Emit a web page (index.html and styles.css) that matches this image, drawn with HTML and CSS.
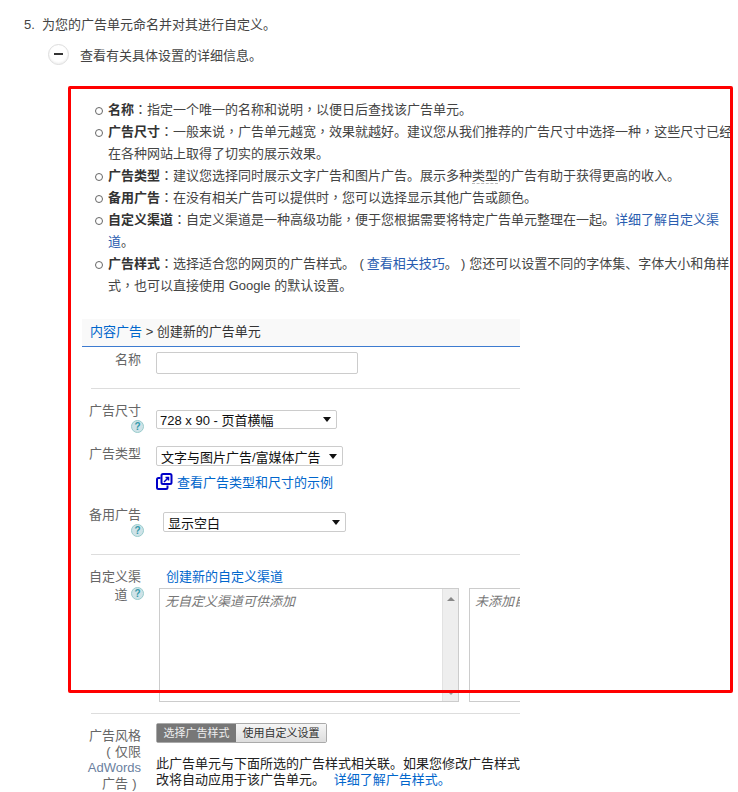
FILE: index.html
```html
<!DOCTYPE html>
<html lang="zh-CN">
<head>
<meta charset="utf-8">
<title>广告单元</title>
<link rel="stylesheet" href="styles.css">
</head>
<body>
<div class="page">
  <div class="step"><span class="num">5.</span><span>为您的广告单元命名并对其进行自定义。</span></div>
  <div class="toggle-row">
    <span class="toggle"><span class="minus"></span></span>
    <span>查看有关具体设置的详细信息。</span>
  </div>
  <ul class="notes">
    <li><b>名称</b><span class="p">：</span>指定一个唯一的名称和说明<span class="p">，</span>以便日后查找该广告单元。</li>
    <li><b>广告尺寸</b><span class="p">：</span>一般来说<span class="p">，</span>广告单元越宽<span class="p">，</span>效果就越好。建议您从我们推荐的广告尺寸中选择一种<span class="p">，</span>这些尺寸已经<br>在各种网站上取得了切实的展示效果。</li>
    <li><b>广告类型</b><span class="p">：</span>建议您选择同时展示文字广告和图片广告。展示多种<span class="dotted">类型</span>的广告有助于获得更高的收入。</li>
    <li><b>备用广告</b><span class="p">：</span>在没有相关广告可以提供时<span class="p">，</span>您可以选择显示其他广告或颜色。</li>
    <li><b>自定义渠道</b><span class="p">：</span>自定义渠道是一种高级功能<span class="p">，</span>便于您根据需要将特定广告单元整理在一起。<a class="link2">详细了解自定义渠</a><br><a class="link2">道</a>。</li>
    <li><b>广告样式</b><span class="p">：</span>选择适合您的网页的广告样式。<span class="paren">(</span> <a class="link2">查看相关技巧</a>。<span class="paren close">)</span> 您还可以设置不同的字体集、字体大小和角样<br>式<span class="p">，</span>也可以直接使用 Google 的默认设置。</li>
  </ul>

  <div class="form">
    <div class="crumb"><a class="link">内容广告</a> &gt; 创建新的广告单元</div>

    <div class="row row-name">
      <div class="label">名称</div>
      <div class="ctl"><input class="name-input" type="text"></div>
    </div>
    <div class="rule"></div>

    <div class="row row-size">
      <div class="label">广告尺寸<br><span class="help">?</span></div>
      <div class="ctl"><div class="select sel-size"><span>728 x 90 - 页首横幅</span><i class="caret"></i></div></div>
    </div>
    <div class="row row-type">
      <div class="label">广告类型</div>
      <div class="ctl">
        <div class="select sel-type"><span>文字与图片广告/富媒体广告</span><i class="caret"></i></div>
        <div class="examples">
          <svg class="copy" width="17" height="17" viewBox="0 0 17 17" aria-hidden="true">
            <rect x="5.500" y="1" width="10" height="10" rx="1.500" fill="#fff" stroke="#0000c8" stroke-width="2"/>
            <path d="M4.500 5H2.500Q1 5 1 6.500V14.500Q1 16 2.500 16H10Q11.500 16 11.500 14.500V12.500" fill="none" stroke="#0000c8" stroke-width="2"/>
            <path d="M8 9L12 5M9.500 4.500H12.500V7.500" fill="none" stroke="#0000c8" stroke-width="1.500"/>
          </svg>
          <a class="link">查看广告类型和尺寸的示例</a>
        </div>
      </div>
    </div>
    <div class="row row-fallback">
      <div class="label">备用广告<br><span class="help">?</span></div>
      <div class="ctl"><div class="select sel-fallback"><span>显示空白</span><i class="caret"></i></div></div>
    </div>
    <div class="rule"></div>

    <div class="row row-channel">
      <div class="label">自定义渠<br>道 <span class="help">?</span></div>
      <div class="ctl">
        <a class="link new-channel">创建新的自定义渠道</a>
        <div class="lists">
          <div class="listbox list-a"><em>无自定义渠道可供添加</em><div class="scroll"><i class="up"></i><i class="down"></i></div></div>
          <div class="listbox list-b"><em>未添加自定义渠道</em></div>
        </div>
      </div>
    </div>
    <div class="rule"></div>

    <div class="row row-style">
      <div class="label">广告风格<br><span class="paren">(</span>仅限<br><span class="adwords">AdWords</span><br>广告<span class="paren">)</span></div>
      <div class="ctl">
        <div class="switch"><span class="on">选择广告样式</span><span class="off">使用自定义设置</span></div>
        <p class="style-text">此广告单元与下面所选的广告样式相关联。如果您修改广告样式<br>改将自动应用于该广告单元。 <a class="link more">详细了解广告样式。</a></p>
      </div>
    </div>
  </div>

  <div class="redbox"></div>
</div>
</body>
</html>
```
FILE: styles.css
```css
* { box-sizing: border-box; }
html, body { margin: 0; padding: 0; background: #fff; }
body { font-family: "Liberation Sans", "Noto Sans CJK SC", sans-serif; font-size: 13px; color: #444; overflow: hidden; }
.page { position: relative; width: 738px; height: 792px; overflow: hidden; padding-top: 15px; }
a { text-decoration: none; }

.step { display: flex; height: 20px; line-height: 20px; padding-left: 24px; }
.num { width: 18px; }
.toggle-row { display: flex; align-items: center; height: 22px; margin-top: 8px; padding-left: 48px; }
.toggle { width: 21px; height: 21px; margin-right: 11px; border: 1px solid #ddd; border-radius: 50%; display: flex; align-items: center; justify-content: center; background: #fff; box-shadow: inset 0 -1px 2px #eee; }
.minus { width: 9px; height: 2px; background: #333; }

.notes { list-style: none; margin: 34px 0 0; padding: 0 0 0 108px; width: 730px; overflow: hidden; white-space: nowrap; line-height: 22px; height: 209px; }
.notes li { position: relative; }
.notes li::before { content: ""; position: absolute; left: -13px; top: 8px; width: 6px; height: 6px; border: 1px solid #666; border-radius: 50%; }
.notes b { color: #333; }
.p { font-family: "Liberation Sans", "Noto Sans CJK TC", sans-serif; font-feature-settings: "locl" 0; }
.paren { display: inline-block; width: 13px; text-align: center; }
.notes .paren + a { margin-left: -5px; }
.notes .close { margin-right: -4px; margin-left: -1px; }
.link2 { color: #2a5db0; }
.dotted { border-bottom: 1px dashed #bbb; }

.form { width: 438px; margin-left: 82px; margin-top: 11px; overflow: hidden; color: #555; font-size: 13px; }
.crumb { height: 28px; line-height: 25px; padding-left: 8px; background: #f9f9f9; border-bottom: 1px solid #3d7bd0; color: #333; }
.link { color: #0066cc; }
.row { display: flex; }
.label { width: 59px; text-align: right; line-height: 18px; flex: none; color: #666; }
.ctl { margin-left: 15px; flex: none; width: 364px; }
.rule { height: 1px; background: #ddd; margin-left: 9px; }

.row-name { padding-top: 5px; height: 41px; }
.row-name .label { margin-top: -1px; }
.name-input { display: block; width: 202px; height: 22px; border: 1px solid #ccc; border-radius: 2px; background: #fff; margin: 0; padding: 0; }

.row-size { padding-top: 14px; height: 56px; }
.row-size .ctl { padding-top: 7px; }
.row-size .label, .row-fallback .label { line-height: 16px; }
.row-type { height: 62px; }
.row-type .ctl { padding-top: 1px; }
.row-fallback { height: 47px; }
.select { display: flex; align-items: center; justify-content: space-between; height: 20px; border: 1px solid #ccc; border-radius: 2px; padding: 0 5px 0 4px; background: #fff; color: #111; font-size: 13px; }
.caret { width: 0; height: 0; border: 4px solid transparent; border-top: 5px solid #111; border-bottom: 0; }
.row-size .select { width: 181px; height: 19px; padding-left: 3px; }
.sel-type { width: 187px; height: 20px; }
.sel-fallback { width: 183px; margin-left: 7px; margin-top: 5px; height: 20px; }
.help { display: inline-block; width: 13px; height: 13px; border-radius: 50%; border: 1px solid #9cc; background: #cfe3e8; color: #39a; font-size: 10px; line-height: 11px; text-align: center; font-weight: bold; vertical-align: top; margin-top: 1px; margin-right: -3px; }

.examples { display: flex; align-items: center; margin-top: 5px; height: 20px; }
.copy { margin-right: 4px; }

.row-channel { height: 158px; padding-top: 13px; }
.new-channel { display: block; margin-left: 10px; line-height: 18px; }
.lists { display: flex; margin-left: 3px; margin-top: 2px; }
.listbox { position: relative; flex: none; height: 114px; border: 1px solid #ccc; padding: 2px 5px; color: #777; }
.listbox em { font-family: "Liberation Serif", "Noto Sans CJK SC", serif; font-style: italic; }
.list-a { width: 300px; margin-right: 10px; }
.list-b { width: 120px; }
.scroll { position: absolute; top: 0; right: 0; bottom: 0; width: 16px; background: #eee; border-left: 1px solid #e2e2e2; }
.up { position: absolute; left: 4px; top: 8px; border: 4px solid transparent; border-bottom: 4px solid #888; border-top: 0; }
.down { position: absolute; left: 6px; bottom: 6px; border: 2px solid transparent; border-top: 2px solid #999; border-bottom: 0; }

.row-style { padding-top: 10px; }
.row-style .label { line-height: 16px; padding-top: 4px; }
.row-style .ctl { margin-top: -1px; }
.adwords { color: #6b7fa0; }
.switch { display: flex; width: 171px; height: 20px; border: 1px solid #aaa; border-radius: 2px; font-size: 11px; line-height: 18px; text-align: center; }
.on { width: 79px; background: #777; color: #eee; }
.off { flex: 1; background: linear-gradient(#f5f5f5, #ddd); color: #333; }
.style-text { margin: 13px 0 0; line-height: 16px; color: #222; white-space: nowrap; }
.more { margin-left: 5px; }

.redbox { position: absolute; left: 68px; top: 86px; width: 665px; height: 607px; border: 3px solid #f00; border-radius: 2px; pointer-events: none; }
```
